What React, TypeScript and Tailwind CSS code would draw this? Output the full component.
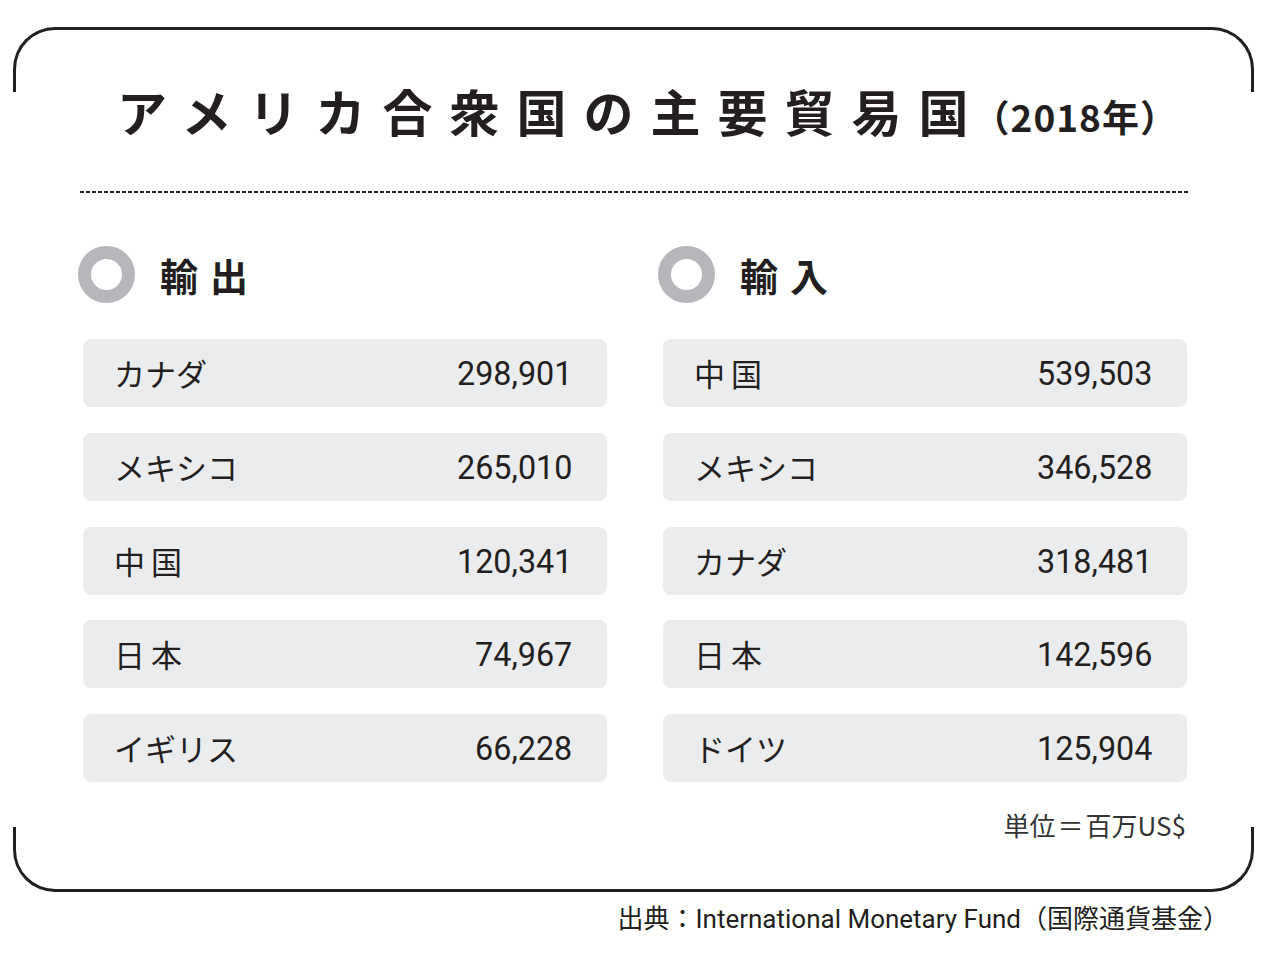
const exportsData = [
  { name: 'カナダ', value: '298,901' },
  { name: 'メキシコ', value: '265,010' },
  { name: '中国', value: '120,341', spaced: true },
  { name: '日本', value: '74,967', spaced: true },
  { name: 'イギリス', value: '66,228' },
];

const importsData = [
  { name: '中国', value: '539,503', spaced: true },
  { name: 'メキシコ', value: '346,528' },
  { name: 'カナダ', value: '318,481' },
  { name: '日本', value: '142,596', spaced: true },
  { name: 'ドイツ', value: '125,904' },
];

type Row = { name: string; value: string; spaced?: boolean };

const Ring = () => <div className="h-[57px] w-[57px] shrink-0 rounded-full border-[13px] border-[#b6b7ba]" />;

const Column = ({ title, rows }: { title: string; rows: Row[] }) => {
  return (
    <div className="w-[529px]">
      <div className="flex h-[57px] items-center">
        <Ring />
        <span className="ml-[25px] text-[38px] leading-[38px] font-bold tracking-[12px] text-[#231f20]">{title}</span>
      </div>
      <div className="mt-[36px] flex flex-col gap-[25.75px] pl-[5px]">
        {rows.map((row) => (
          <div
            key={row.name}
            className="flex h-[68px] items-center justify-between rounded-[8px] bg-[#ebecee] pr-[35px] pl-[31px]"
          >
            <span className={row.spaced ? 'text-[31px] leading-[40px] tracking-[6px]' : 'text-[31px] leading-[40px]'}>
              {row.name}
            </span>
            <span className="inline-block origin-right scale-x-95 font-['Roboto',sans-serif] text-[34px] leading-[40px]">
              {row.value}
            </span>
          </div>
        ))}
      </div>
    </div>
  );
};

export default function App() {
  return (
    <div className="min-h-[966px] w-[1281px] bg-white pt-[27px] font-['Noto_Sans_CJK_JP',sans-serif] text-[#231f20]">
      <div className="ml-[13px] w-[1241px]">
        {/* top bracket */}
        <div className="h-[65px] rounded-t-[42px] border-x-[3px] border-t-[3px] border-[#231f20]" />

        <h1 className="-mt-[7px] flex items-baseline justify-center pl-[28px] text-[50px] leading-[50px] font-bold whitespace-nowrap">
          <span className="tracking-[17px]">アメリカ合衆国の主要貿易</span>
          <span>国</span>
          <span className="ml-[4px] text-[37px] tracking-[1px]">（2018年）</span>
        </h1>

        <div className="mt-[50px] ml-[67px] h-[2px] w-[1108px] bg-[repeating-linear-gradient(90deg,#231f20_0_4px,transparent_4px_6px)]" />

        <div className="mt-[53px] flex gap-[51px] pl-[65px]">
          <Column title="輸出" rows={exportsData} />
          <Column title="輸入" rows={importsData} />
        </div>

        <div className="mt-[30px] pr-[68px] text-right text-[26px] leading-[26px] text-[#333]">
          単位<span className="mx-[2px]">＝</span>百万US$
        </div>

        {/* bottom bracket */}
        <div className="-mt-[11px] h-[65px] rounded-b-[42px] border-x-[3px] border-b-[3px] border-[#231f20]" />
      </div>

      <div className="mt-[14px] pr-[52px] text-right font-['Roboto','Noto_Sans_CJK_JP',sans-serif] text-[26px] leading-[26px]">
        出典：International Monetary Fund（国際通貨基金）
      </div>
    </div>
  );
}
